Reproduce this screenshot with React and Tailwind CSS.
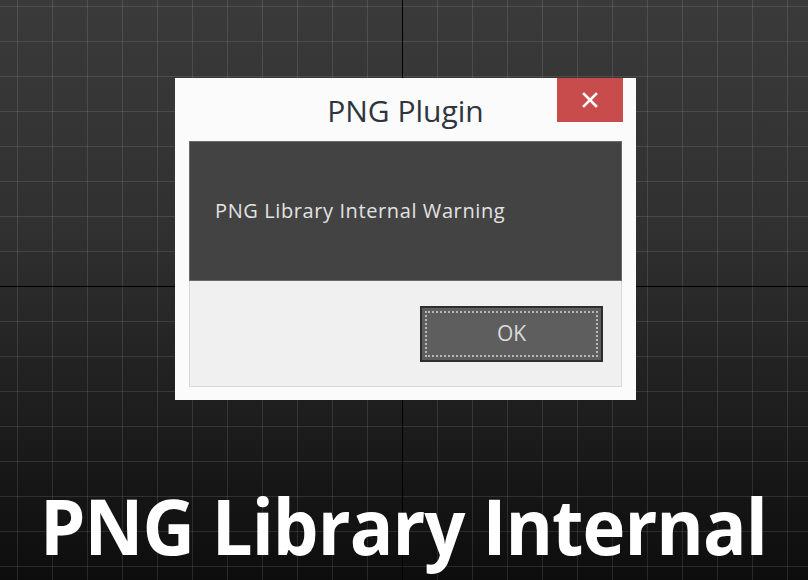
export default function App() {
  return (
    <div className="relative w-[808px] h-[580px] overflow-hidden bg-[linear-gradient(to_bottom,#3a3a3a_0%,#303030_40%,#1d1d1d_72%,#0d0d0d_100%)]">
      {/* canvas grid + axis lines */}
      <div className="absolute inset-0 bg-[image:linear-gradient(to_right,rgba(255,255,255,0.11)_1px,transparent_1px),linear-gradient(to_bottom,rgba(255,255,255,0.11)_1px,transparent_1px)] bg-[size:35px_35px] bg-[position:17px_6px]" />
      <div className="absolute top-0 bottom-0 left-[402px] w-px bg-black" />
      <div className="absolute left-0 right-0 top-[286px] h-px bg-black" />

      <div className="relative flex flex-col h-full">
        <div className="pt-[78px] pl-[175px]">
          <Dialog />
        </div>
        <div className="pl-[40px] mt-[87px] h-[78px]">
          <span
            className="inline-block text-[77px] leading-[78px] font-bold text-white whitespace-nowrap origin-left scale-x-[0.94] tracking-[-1px]"
            style={{ fontFamily: "'Open Sans', sans-serif" }}
          >
            PNG Library Internal
          </span>
        </div>
      </div>
    </div>
  );
}

function Dialog() {
  return (
    <div className="w-[461px] h-[322px] bg-[#fbfbfb] flex flex-col" style={{ fontFamily: "'Open Sans', 'Noto Sans', sans-serif" }}>
      <div className="relative h-[63px] flex items-center justify-center">
        <span className="text-[30px] text-[#2f3540] mt-[1px]">PNG Plugin</span>
        <button className="absolute top-0 right-[13px] w-[66px] h-[44px] bg-[#c94c4d] flex items-center justify-center">
          <svg width="16" height="16" viewBox="0 0 16 16">
            <path d="M2 2L14 14M14 2L2 14" stroke="#fff" strokeWidth="2.6" strokeLinecap="square" />
          </svg>
        </button>
      </div>

      <div className="mx-[14px] h-[140px] bg-[#434343] border border-[#6a6a6a] flex items-center pl-[25px]">
        <span className="text-[20px] tracking-[0.6px] text-[#e2e2e2]">PNG Library Internal Warning</span>
      </div>

      <div className="mx-[14px] h-[106px] bg-[#f0f0f0] border border-t-0 border-[#d8d8d8] flex justify-end items-start pt-[25px] pr-[18px]">
        <button className="w-[183px] h-[56px] bg-[#5e5e5e] border-2 border-[#2e2e2e] p-[3px]">
          <div className="w-full h-full border-2 border-dotted border-[#b8b8b8] flex items-center justify-center">
            <span className="text-[21px] text-[#dadada]">OK</span>
          </div>
        </button>
      </div>
    </div>
  );
}
